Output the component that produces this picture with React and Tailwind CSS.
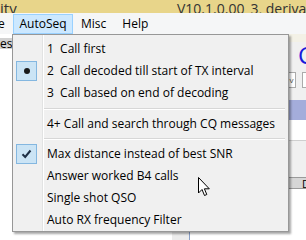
import React from "react";

const font = { fontFamily: '"Open Sans", "Noto Sans", sans-serif' };

function Check() {
  return (
    <svg width="11" height="10" viewBox="0 0 11 10">
      <path d="M1.5 5.2 L4.2 8 L9.5 1.5" fill="none" stroke="#1e2f45" strokeWidth="2" />
    </svg>
  );
}

function Row({ icon, label }) {
  return (
    <div className="flex h-[22px] items-center">
      <div className="flex h-full w-[30px] items-center pl-[3px]">
        {icon === "radio" && (
          <div className="flex h-[20px] w-[21px] items-center justify-center border border-[#84b7e0] bg-[#cbe4f5]">
            <div className="h-[6px] w-[6px] rounded-full bg-[#1a1a1a]" />
          </div>
        )}
        {icon === "check" && (
          <div className="flex h-[20px] w-[21px] items-center justify-center border border-[#84b7e0] bg-[#cbe4f5]">
            <Check />
          </div>
        )}
      </div>
      <div className="pl-[4px] text-[12px] text-black whitespace-pre">{label}</div>
    </div>
  );
}

function Sep({ h }) {
  return (
    <div className={`flex ${h} items-center`}>
      <div className="w-[31px]" />
      <div className="mr-[3px] flex-1 border-t border-[#d7d7d7] border-b-white border-b" />
    </div>
  );
}

export default function App() {
  return (
    <div className="relative h-[240px] w-[306px] overflow-hidden bg-white" style={font}>
      {/* title bar */}
      <div className="flex h-[13px] items-end overflow-hidden bg-[#e8d58a] text-[#333]">
        <span className="mb-[-3px] w-[177px] shrink-0 text-[15px] leading-[15px]">ity</span>
        <span className="mb-[-3px] shrink-0 whitespace-nowrap text-[14px] leading-[15px]">V10.1.0.00_3, deriva</span>
      </div>
      {/* menu bar */}
      <div className="flex h-[21px] items-center bg-[#f5f6f7] text-[12px] text-black">
        <span className="ml-[-2px] w-[15px]">e</span>
        <div className="flex h-[20px] w-[60px] items-center justify-center border border-[#99d1ff] bg-[#cce8ff]">AutoSeq</div>
        <span className="ml-[8px]">Misc</span>
        <span className="ml-[16px]">Help</span>
      </div>
      {/* body */}
      <div className="flex h-[206px]">
        <div className="w-[12px] pt-[4px]">
          <div className="h-[11px] overflow-hidden bg-[#d2d2d2] text-[12px] leading-[11px] text-black">es</div>
        </div>
        <div className="flex-1 bg-white">
          <div className="mt-[198px] ml-[160px] flex h-[8px] w-[18px] justify-end bg-[#ececec]">
            <div className="h-full w-[1px] bg-[#8aa0c8]" />
          </div>
        </div>
        <div className="flex w-[18px] flex-col bg-[#f0f0f0]">
          <div className="h-[8px] bg-[#f3f1e6]" />
          <div className="h-[30px] overflow-visible pl-[10px] text-[24px] leading-[26px] text-[#1a1adb]">C</div>
          <div className="flex h-[16px] items-center">
            <div className="flex h-full w-[8px] items-center justify-center border-y border-r border-[#ababab] bg-white text-[8px] text-[#555]">v</div>
            <div className="w-[6px]" />
            <div className="h-full w-[4px] border-y border-l border-[#ababab] bg-white" />
          </div>
          <div className="h-[12px]" />
          <div className="h-[20px] bg-[#a4addb]" />
          <div className="h-[20px] bg-white" />
          <div className="h-[1px] bg-[#cfcfcf]" />
          <div className="h-[36px] bg-[#f0f0f0]" />
          <div className="h-[12px] overflow-hidden border-y border-[#9a9a9a] bg-[#d6d6d6] pl-[14px] text-[11px] leading-[11px] text-black">D</div>
          <div className="flex-1 bg-white" />
        </div>
      </div>

      {/* dropdown menu */}
      <div className="absolute left-[12px] top-[34px] w-[277px] border border-[#979797] bg-[#f0f0f0] bg-[linear-gradient(to_right,transparent_29px,#e2e3e3_29px,#e2e3e3_30px,#ffffff_30px,#ffffff_31px,transparent_31px)] pt-[3px] shadow-[2px_2px_2px_rgba(0,0,0,0.35)]">
        <Row label="1  Call first" />
        <Row icon="radio" label="2  Call decoded till start of TX interval" />
        <Row label="3  Call based on end of decoding" />
        <Sep h="h-[9px]" />
        <Row label="4+ Call and search through CQ messages" />
        <Sep h="h-[8px]" />
        <Row icon="check" label="Max distance instead of best SNR" />
        <Row label="Answer worked B4 calls" />
        <Row label="Single shot QSO" />
        <Row label="Auto RX frequency Filter" />
      </div>

      {/* cursor */}
      <svg className="absolute left-[198px] top-[177px]" width="13" height="20" viewBox="0 0 13 20">
        <path d="M0.5 0.5 L0.5 16 L4 12.5 L6.5 18.5 L8.8 17.5 L6.4 11.8 L11.3 11.8 Z" fill="white" stroke="black" strokeWidth="1" strokeLinejoin="miter" />
      </svg>
    </div>
  );
}
